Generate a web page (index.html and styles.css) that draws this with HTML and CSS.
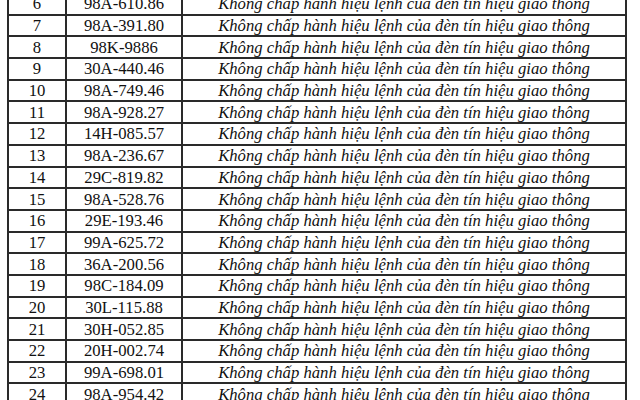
FILE: index.html
```html
<!DOCTYPE html>
<html lang="vi">
<head>
<meta charset="utf-8">
<link rel="stylesheet" href="styles.css">
</head>
<body>
<table class="list">
<colgroup><col class="c-num"><col class="c-plate"><col class="c-desc"></colgroup>
<tbody>
<tr><td>6</td><td>98A-610.86</td><td class="desc">Không chấp hành hiệu lệnh của đèn tín hiệu giao thông</td></tr>
<tr><td>7</td><td>98A-391.80</td><td class="desc">Không chấp hành hiệu lệnh của đèn tín hiệu giao thông</td></tr>
<tr><td>8</td><td>98K-9886</td><td class="desc">Không chấp hành hiệu lệnh của đèn tín hiệu giao thông</td></tr>
<tr><td>9</td><td>30A-440.46</td><td class="desc">Không chấp hành hiệu lệnh của đèn tín hiệu giao thông</td></tr>
<tr><td>10</td><td>98A-749.46</td><td class="desc">Không chấp hành hiệu lệnh của đèn tín hiệu giao thông</td></tr>
<tr><td>11</td><td>98A-928.27</td><td class="desc">Không chấp hành hiệu lệnh của đèn tín hiệu giao thông</td></tr>
<tr><td>12</td><td>14H-085.57</td><td class="desc">Không chấp hành hiệu lệnh của đèn tín hiệu giao thông</td></tr>
<tr><td>13</td><td>98A-236.67</td><td class="desc">Không chấp hành hiệu lệnh của đèn tín hiệu giao thông</td></tr>
<tr><td>14</td><td>29C-819.82</td><td class="desc">Không chấp hành hiệu lệnh của đèn tín hiệu giao thông</td></tr>
<tr><td>15</td><td>98A-528.76</td><td class="desc">Không chấp hành hiệu lệnh của đèn tín hiệu giao thông</td></tr>
<tr><td>16</td><td>29E-193.46</td><td class="desc">Không chấp hành hiệu lệnh của đèn tín hiệu giao thông</td></tr>
<tr><td>17</td><td>99A-625.72</td><td class="desc">Không chấp hành hiệu lệnh của đèn tín hiệu giao thông</td></tr>
<tr><td>18</td><td>36A-200.56</td><td class="desc">Không chấp hành hiệu lệnh của đèn tín hiệu giao thông</td></tr>
<tr><td>19</td><td>98C-184.09</td><td class="desc">Không chấp hành hiệu lệnh của đèn tín hiệu giao thông</td></tr>
<tr><td>20</td><td>30L-115.88</td><td class="desc">Không chấp hành hiệu lệnh của đèn tín hiệu giao thông</td></tr>
<tr><td>21</td><td>30H-052.85</td><td class="desc">Không chấp hành hiệu lệnh của đèn tín hiệu giao thông</td></tr>
<tr><td>22</td><td>20H-002.74</td><td class="desc">Không chấp hành hiệu lệnh của đèn tín hiệu giao thông</td></tr>
<tr><td>23</td><td>99A-698.01</td><td class="desc">Không chấp hành hiệu lệnh của đèn tín hiệu giao thông</td></tr>
<tr><td>24</td><td>98A-954.42</td><td class="desc">Không chấp hành hiệu lệnh của đèn tín hiệu giao thông</td></tr>
</tbody>
</table>
</body>
</html>
```
FILE: styles.css
```css
html, body {
  margin: 0;
  padding: 0;
  background: #fff;
  overflow: hidden;
}
body {
  width: 640px;
  height: 400px;
}
.list {
  border-collapse: collapse;
  table-layout: fixed;
  width: 618px;
  margin: -8px 0 0 7px;
  font-family: "Liberation Serif", "Times New Roman", serif;
  font-size: 16.7px;
  color: #111;
}
.c-num { width: 58px; }
.c-plate { width: 116px; }
.c-desc { width: 444px; }
.list td {
  border: 2px solid #2a2a2a;
  height: 19.7px;
  padding: 0;
  text-align: center;
  vertical-align: middle;
  line-height: 19px;
  white-space: nowrap;
}
.list td.desc {
  font-style: italic;
}
```
